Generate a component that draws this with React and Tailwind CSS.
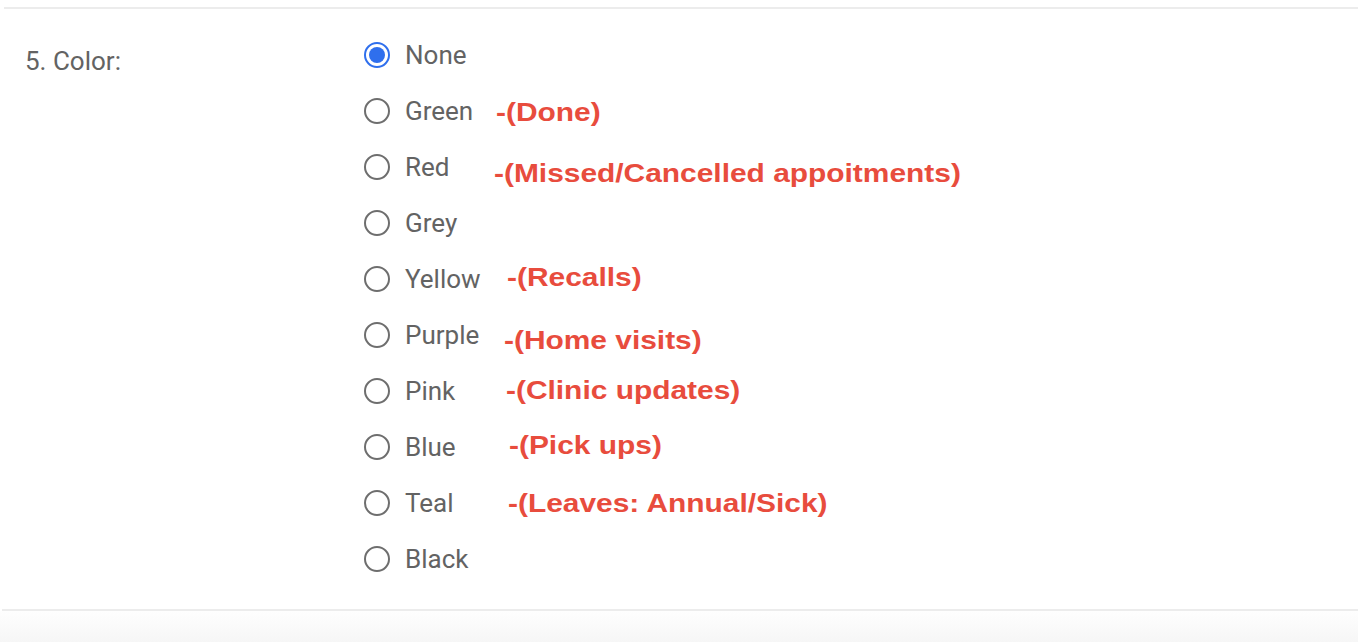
import React from "react";

const rows = [
  { name: "None", checked: true },
  { name: "Green", note: "-(Done)", ml: 496, dy: 1 },
  { name: "Red", note: "-(Missed/Cancelled appoitments)", ml: 494, dy: 6 },
  { name: "Grey" },
  { name: "Yellow", note: "-(Recalls)", ml: 507, dy: -2 },
  { name: "Purple", note: "-(Home visits)", ml: 504, dy: 5 },
  { name: "Pink", note: "-(Clinic updates)", ml: 506, dy: -1 },
  { name: "Blue", note: "-(Pick ups)", ml: 509, dy: -2 },
  { name: "Teal", note: "-(Leaves: Annual/Sick)", ml: 508, dy: 0 },
  { name: "Black" },
];

function Radio({ checked }) {
  if (checked) {
    return (
      <span className="flex h-[26px] w-[26px] shrink-0 items-center justify-center rounded-full border-2 border-[#2f6fed] bg-white">
        <span className="h-[16px] w-[16px] rounded-full bg-[#2f6fed]" />
      </span>
    );
  }
  return <span className="h-[26px] w-[26px] shrink-0 rounded-full border-2 border-[#6e6e6e] bg-white" />;
}

export default function App() {
  return (
    <div className="h-[642px] w-[1358px] overflow-hidden bg-white" style={{ fontFamily: "Roboto, 'Liberation Sans', sans-serif" }}>
      <div className="pt-[7px]">
        <div className="ml-[4px] border-t-2 border-[#ececec]" />
        <div className="flex pl-[25px] pt-[18px]">
          <div className="w-[339px] shrink-0 pt-[19px] text-[26px] leading-[30px] text-[#636363]">5. Color:</div>
          <div className="flex flex-col">
            {rows.map((r) => (
              <div key={r.name} className="relative flex h-[56px] items-center">
                <Radio checked={r.checked} />
                <span className="ml-[15px] text-[26px] leading-[30px] text-[#636363]">{r.name}</span>
                {r.note && (
                  <span
                    className="absolute origin-left scale-x-[1.15] whitespace-nowrap text-[26px] font-bold leading-[30px] text-[#e84c3d]"
                    style={{ left: r.ml - 364, top: 13 + r.dy, fontFamily: "'Liberation Sans', Arial, sans-serif" }}
                  >
                    {r.note}
                  </span>
                )}
              </div>
            ))}
          </div>
        </div>
        <div className="ml-[2px] mt-[22px] border-t-2 border-[#ececec]" />
        <div className="h-[40px] bg-gradient-to-b from-[#fefefe] to-[#f4f4f4]" />
      </div>
    </div>
  );
}
